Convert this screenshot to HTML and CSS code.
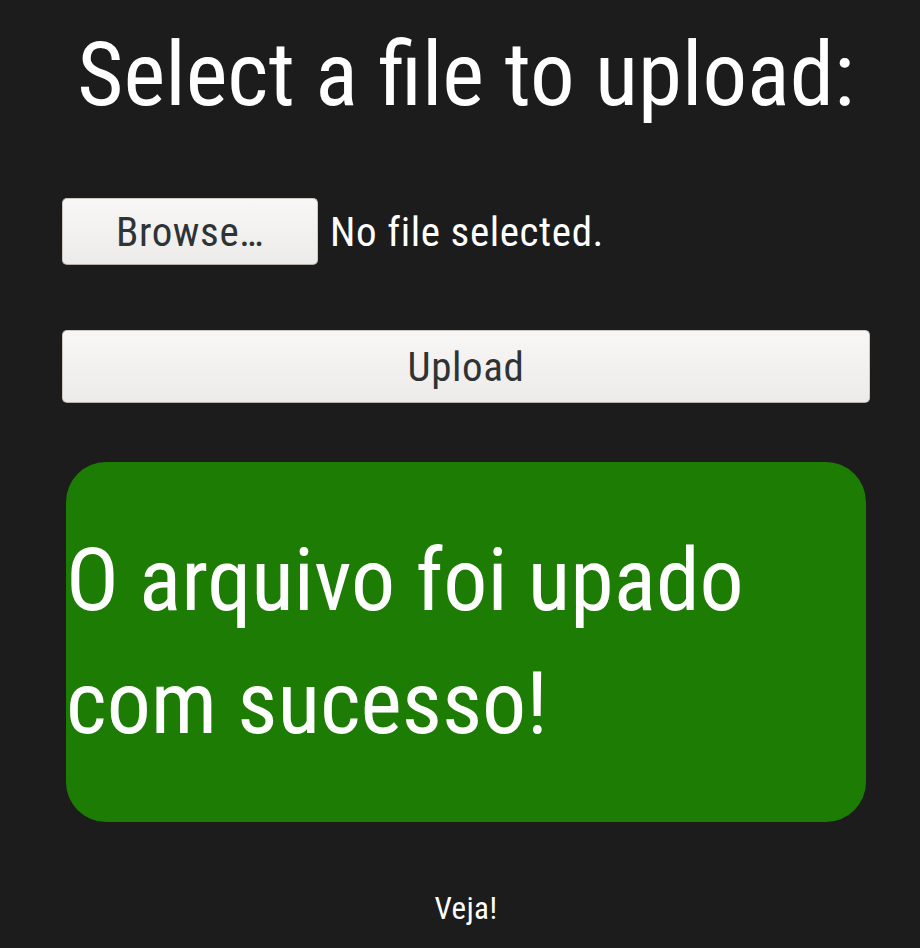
FILE: index.html
```html
<!DOCTYPE html>
<html lang="en">
<head>
<meta charset="utf-8">
<title>Upload</title>
<link rel="stylesheet" href="styles.css">
</head>
<body>
<main class="page">
  <h1 class="title">Select a file to upload:</h1>
  <form class="upload-form">
    <div class="file-row">
      <button type="button" class="btn btn-browse">Browse…</button>
      <span class="file-status">No file selected.</span>
    </div>
    <button type="button" class="btn btn-upload">Upload</button>
  </form>
  <div class="success">
    <p class="success-text">O arquivo foi upado com sucesso!</p>
  </div>
  <p class="footer">Veja!</p>
</main>
</body>
</html>
```
FILE: styles.css
```css
html, body {
  margin: 0;
  padding: 0;
  background: #1c1c1c;
}
body {
  color: #ffffff;
  font-family: "Roboto", "Open Sans", sans-serif;
  font-stretch: 75%;
}
.page {
  margin-left: 62px;
  width: 808px;
  display: flex;
  flex-direction: column;
}
.title {
  margin: 25px 0 0;
  font-size: 89px;
  line-height: 100px;
  font-weight: 400;
  text-align: center;
  white-space: nowrap;
}
.upload-form {
  display: flex;
  flex-direction: column;
  margin-top: 73px;
}
.file-row {
  display: flex;
  align-items: center;
  gap: 12px;
}
.btn {
  font-family: inherit;
  font-stretch: 75%;
  font-size: 41px;
  letter-spacing: 0.6px;
  color: #2e3436;
  background: linear-gradient(#f8f7f6, #edebe9);
  border: 1px solid #cdc7c2;
  border-bottom-color: #b6b0a9;
  border-radius: 5px;
  padding: 0;
  display: flex;
  align-items: center;
  justify-content: center;
  box-sizing: border-box;
}
.btn-browse {
  width: 256px;
  height: 67px;
}
.file-status {
  font-size: 41px;
  letter-spacing: 0.6px;
  color: #ffffff;
}
.btn-upload {
  margin-top: 65px;
  width: 808px;
  height: 73px;
}
.success {
  margin: 59px 0 0 4px;
  width: 800px;
  height: 360px;
  box-sizing: border-box;
  background: #1c7c03;
  border-radius: 40px;
  padding-top: 56px;
}
.success-text {
  margin: 0;
  font-size: 88px;
  line-height: 123px;
}
.footer {
  margin: 69px 0 0;
  font-size: 31px;
  letter-spacing: 0.5px;
  line-height: 36px;
  text-align: center;
}
```
